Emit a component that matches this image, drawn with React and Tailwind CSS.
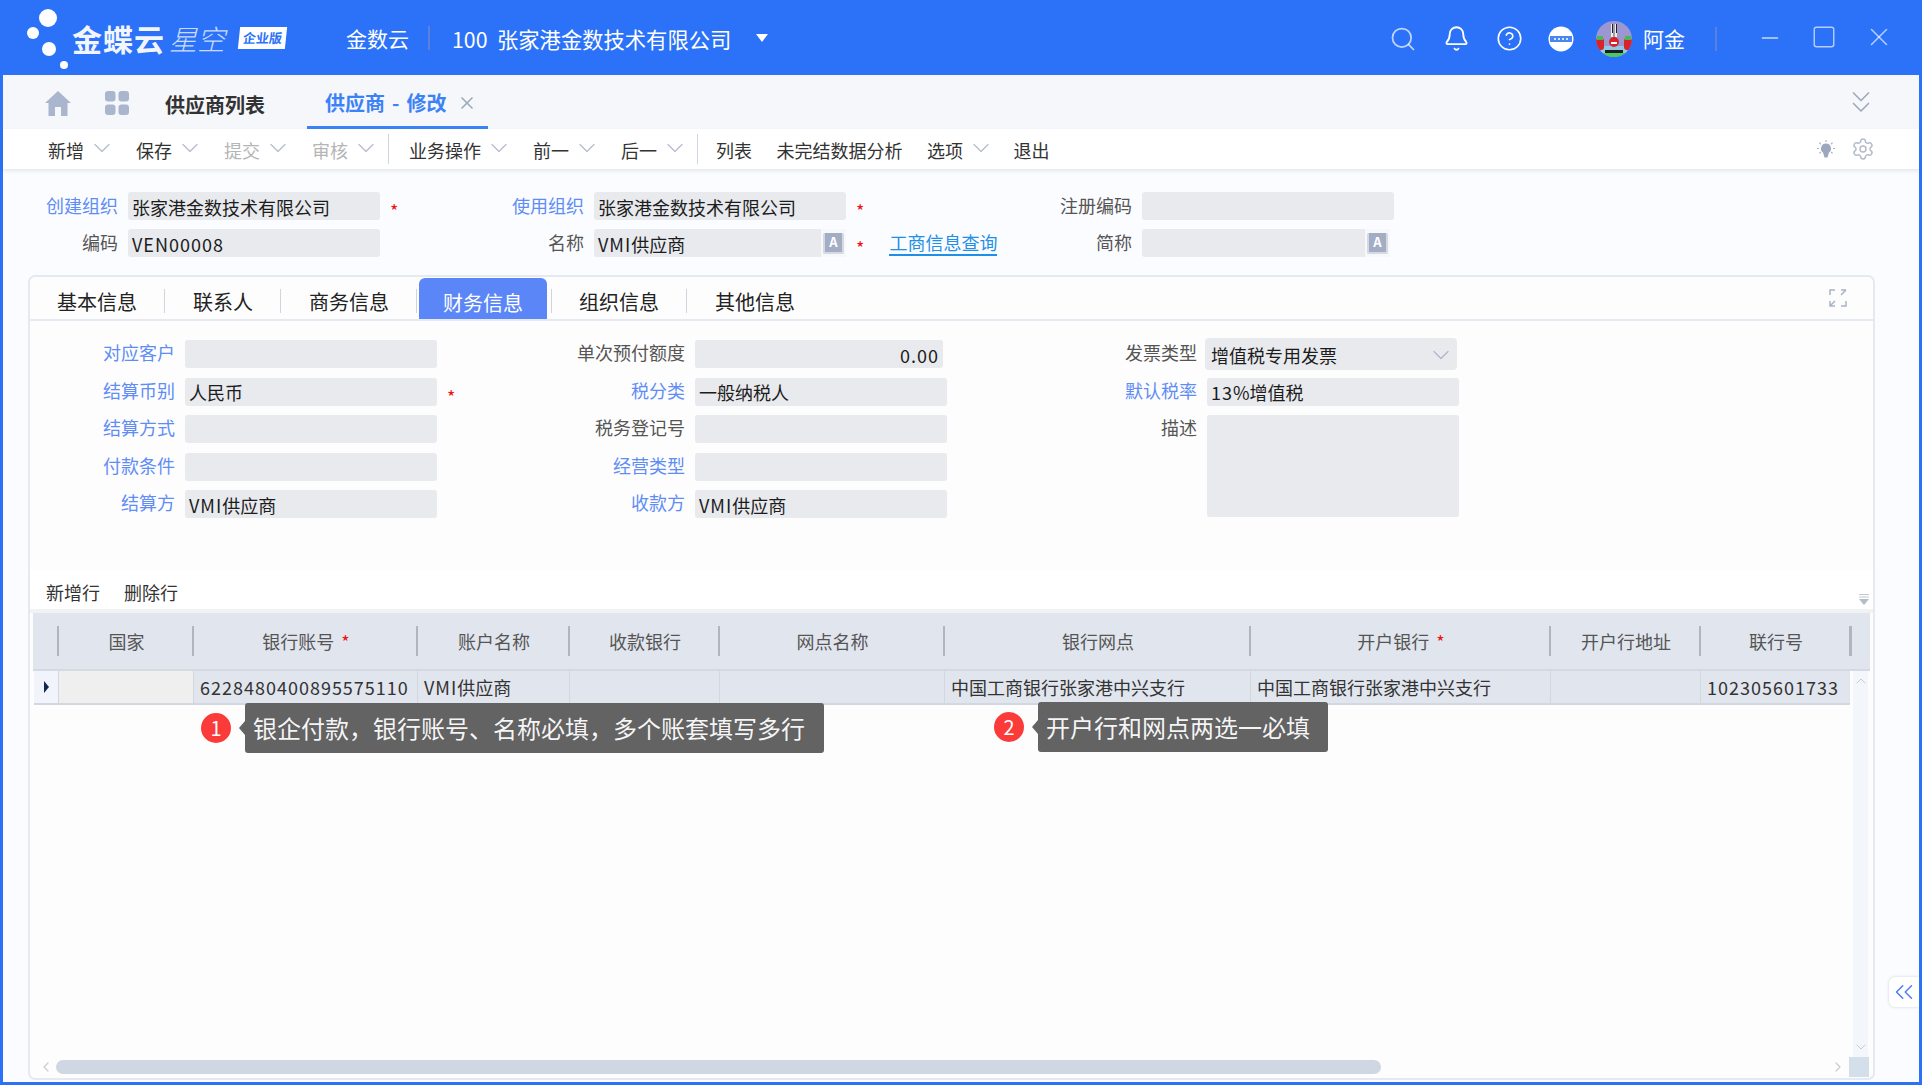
import { Bell, ChevronDown, ChevronLeft, ChevronRight, ChevronUp, ChevronsDown, ChevronsLeft, CircleHelp, Minus, Search, Settings, Square, X } from 'lucide-react';

const font = { fontFamily: '"Noto Sans CJK SC", "Noto Sans", sans-serif' };

const columns = [
  { label: '国家', w: 'w-[135px]' },
  { label: '银行账号', w: 'w-[224px]', required: true, value: '6228480400895575110', number: true },
  { label: '账户名称', w: 'w-[152px]', value: 'VMI供应商' },
  { label: '收款银行', w: 'w-[150px]' },
  { label: '网点名称', w: 'w-[225px]' },
  { label: '银行网点', w: 'w-[306px]', value: '中国工商银行张家港中兴支行' },
  { label: '开户银行', w: 'w-[300px]', required: true, value: '中国工商银行张家港中兴支行' },
  { label: '开户行地址', w: 'w-[150px]' },
  { label: '联行号', w: 'w-[150px]', value: '102305601733', number: true },
];

const colOne = [
  { label: '对应客户', blue: true },
  { label: '结算币别', blue: true, value: '人民币', star: true },
  { label: '结算方式', blue: true },
  { label: '付款条件', blue: true },
  { label: '结算方', blue: true, value: 'VMI供应商' },
];

const colTwo = [
  { label: '单次预付额度', value: '0.00', right: true },
  { label: '税分类', blue: true, value: '一般纳税人' },
  { label: '税务登记号' },
  { label: '经营类型', blue: true },
  { label: '收款方', blue: true, value: 'VMI供应商' },
];

// latin runs sit a little wider than the CJK around them
function Txt({ value }) {
  if (!value) return null;
  return value.split(/([A-Za-z0-9.]+)/).map((part, i) =>
    i % 2 ? <span key={i} className="tracking-[1px]">{part}</span> : part
  );
}

function Star({ className = '' }) {
  return <span className={`text-[#f01010] text-[18px] leading-none ${className}`}>*</span>;
}

function Label({ text, blue, w, className = '' }) {
  return (
    <span className={`${w} shrink-0 text-right text-[18px] leading-[24px] ${blue ? 'text-[#5f8df5]' : 'text-[#555555]'} ${className}`}>{text}</span>
  );
}

function LangIcon() {
  return (
    <span className="w-[25px] h-full flex items-center justify-center bg-[#f7f8fa] shrink-0">
      <span className="w-[21px] h-[21px] rounded-[2px] bg-[#a3adc4] border-2 border-t-0 border-[#d5d9e3] text-white text-[13px] leading-[18px] text-center font-bold">A</span>
    </span>
  );
}

function TopField({ label, blue, labelW, value, lang, star, w = 'w-[252px]' }) {
  return (
    <div className="flex items-center h-[28px]">
      <Label text={label} blue={blue} w={labelW} className="-mt-[3px]" />
      <div className={`${w} ml-[10px] h-full flex items-center bg-[#e8eaee] rounded-[3px] overflow-hidden`}>
        <span className="flex-1 pl-[4px] pt-[2px] text-[18px] text-[#1c1c1c] whitespace-nowrap"><Txt value={value} /></span>
        {lang && <LangIcon />}
      </div>
      {star && <Star className="ml-[10px] mt-[8px]" />}
    </div>
  );
}

function FormField({ label, blue, value, star, right, labelW, w = 'w-[252px]' }) {
  return (
    <div className="flex items-center h-[28px]">
      <Label text={label} blue={blue} w={labelW} className="-mt-[4px]" />
      <div className={`${w} ml-[10px] h-full flex items-center bg-[#e8eaee] rounded-[3px] px-[4px] pt-[2px] text-[18px] text-[#1c1c1c] ${right ? 'justify-end' : ''}`}>
        <Txt value={value} />
      </div>
      {star && <Star className="ml-[10px] mt-[8px]" />}
    </div>
  );
}

function ToolItem({ text, muted, arrow = true }) {
  return (
    <div className="flex items-center gap-[10px] shrink-0">
      <span className={`pt-[2px] text-[18px] leading-[24px] whitespace-nowrap ${muted ? 'text-[#b5b5b5]' : 'text-[#333333]'}`}>{text}</span>
      {arrow && <ChevronDown size={28} strokeWidth={1.1} className="text-[#b6bdcf] -mx-[6px] -mt-[2px]" />}
    </div>
  );
}

function Tip({ n, text, pos, boxW }) {
  return (
    <div className={`absolute flex items-center ${pos}`}>
      <span className="w-[30px] h-[30px] rounded-full bg-[#fb3a3a] text-white text-[20px] leading-[30px] text-center">{n}</span>
      <span className="ml-[8px] w-0 h-0 border-y-[7px] border-y-transparent border-r-[6px] border-r-[#636363]" />
      <div className={`${boxW} h-[50px] flex items-center bg-[#636363] rounded-[3px] pl-[8px] text-[24px] text-white/95 whitespace-nowrap`}>{text}</div>
    </div>
  );
}

function Logo() {
  return (
    <div className="flex items-center w-[346px] shrink-0">
      <svg width="72" height="75" viewBox="0 0 72 75" className="shrink-0">
        <circle cx="48" cy="18" r="9" fill="#fff" />
        <circle cx="33" cy="33" r="6" fill="#fff" />
        <circle cx="49" cy="49" r="7" fill="#fff" />
        <circle cx="64" cy="65" r="4" fill="#fff" />
      </svg>
      <span className="text-[30px] font-bold text-white/95 leading-none tracking-[1px] whitespace-nowrap">金蝶云</span>
      <span className="ml-[4px] text-[28px] italic font-light text-white/75 leading-none whitespace-nowrap">星空</span>
      <span className="ml-[14px] w-[47px] h-[22px] -skew-x-6 bg-white text-[#2b72f8] text-[13px] font-bold leading-[22px] text-center whitespace-nowrap">企业版</span>
    </div>
  );
}

function Avatar() {
  return (
    <svg width="36" height="36" viewBox="0 0 36 36" className="shrink-0">
      <defs>
        <clipPath id="av"><circle cx="18" cy="18" r="18" /></clipPath>
      </defs>
      <g clipPath="url(#av)">
        <rect width="36" height="36" fill="#9c97d0" />
        <rect y="32" width="36" height="4" fill="#49c95f" />
        <rect x="15" y="3" width="2" height="13" fill="#f1f5c0" />
        <rect x="19" y="3" width="2" height="13" fill="#f1f5c0" />
        <rect x="16" y="3" width="1" height="9" fill="#20242a" />
        <rect x="20" y="3" width="1" height="9" fill="#20242a" />
        <rect x="5" y="25" width="26" height="7" fill="#8fc8e0" />
        <rect x="0" y="17" width="8" height="12" rx="3" fill="#d8232a" />
        <rect x="28" y="17" width="8" height="12" rx="3" fill="#d8232a" />
        <rect x="1" y="15" width="6" height="4" fill="#47b85a" />
        <rect x="29" y="15" width="6" height="4" fill="#47b85a" />
        <ellipse cx="18" cy="21" rx="5" ry="5" fill="#d8232a" />
        <rect x="15" y="21" width="6" height="2" fill="#fff" />
        <rect x="9" y="29" width="18" height="3" fill="#1c1c24" />
      </g>
    </svg>
  );
}

function Header() {
  return (
    <header className="h-[75px] shrink-0 flex items-center text-white">
      <Logo />
      <span className="w-[82px] pt-[2px] text-[21px] whitespace-nowrap">金数云</span>
      <span className="w-[2px] h-[24px] bg-[#5d7fe0]" />
      <span className="ml-[22px] pt-[2px] text-[21.3px] whitespace-nowrap w-[303px]">100&nbsp;&nbsp;张家港金数技术有限公司</span>
      <span className="ml-[1px] w-0 h-0 border-x-[6px] border-x-transparent border-t-[8px] border-t-white" />
      <div className="ml-auto flex items-center pr-[28px] pt-[2px]">
        <Search size={28} strokeWidth={1.5} className="text-white/70" />
        <Bell size={27} strokeWidth={1.6} className="ml-[26px]" />
        <CircleHelp size={27} strokeWidth={1.4} className="ml-[26px]" />
        <svg width="26" height="26" viewBox="0 0 26 26" className="ml-[25px]">
          <circle cx="13" cy="13" r="12.5" fill="#fff" />
          <rect x="2" y="10" width="22" height="6" fill="#4b86ee" />
          <g fill="#d6e4fb">
            <rect x="6" y="12" width="2" height="2" />
            <rect x="10" y="12" width="2" height="2" />
            <rect x="14" y="12" width="2" height="2" />
            <rect x="18" y="12" width="2" height="2" />
          </g>
        </svg>
        <span className="ml-[22px]"><Avatar /></span>
        <span className="ml-[11px] text-[21px] whitespace-nowrap">阿金</span>
        <span className="ml-[30px] w-[2px] h-[24px] bg-[#5d7fe0]" />
        <Minus size={26} strokeWidth={1.3} className="ml-[40px] text-white/75 -mt-[2px]" />
        <Square size={26} strokeWidth={1.3} className="ml-[28px] text-white/65 -mt-[4px]" />
        <X size={30} strokeWidth={1.2} className="ml-[27px] text-white/65 -mt-[4px]" />
      </div>
    </header>
  );
}

function TabBar() {
  return (
    <div className="h-[54px] shrink-0 flex bg-[#f5f7fb] pl-[42px] pr-[44px]">
      <div className="flex items-center pt-[2px]">
        <svg width="26" height="25" viewBox="0 0 26 25">
          <path d="M13 0 L26 12 L22.5 12 L22.5 25 L16 25 L16 16 L10 16 L10 25 L3.5 25 L3.5 12 L0 12 Z" fill="#a9b6ce" />
        </svg>
        <svg width="24" height="24" viewBox="0 0 24 24" className="ml-[34px]" fill="#a9b6ce">
          <rect x="0" y="0" width="10.5" height="10.5" rx="3" />
          <rect x="13.5" y="0" width="10.5" height="10.5" rx="3" />
          <rect x="0" y="13.5" width="10.5" height="10.5" rx="3" />
          <rect x="13.5" y="13.5" width="10.5" height="10.5" rx="3" />
        </svg>
      </div>
      <span className="ml-[36px] self-center mt-[5px] text-[20px] font-semibold text-[#333333] whitespace-nowrap">供应商列表</span>
      <div className="ml-[42px] w-[181px] flex items-center pl-[18px] pt-[5px] border-b-[3px] border-[#3b82f6]">
        <span className="text-[20px] font-semibold text-[#3b82f6] whitespace-nowrap [word-spacing:2.5px]">供应商 - 修改</span>
        <X size={20} strokeWidth={2} className="ml-[11px] text-[#a0aabd]" />
      </div>
      <ChevronsDown size={36} strokeWidth={1.1} className="ml-auto mt-[9px] -mr-[4px] text-[#a0aabd]" />
    </div>
  );
}

function Toolbar() {
  return (
    <div className="relative h-[40px] shrink-0 flex items-center bg-white pl-[45px] pr-[44px] shadow-[0_2px_4px_rgba(60,70,100,0.12)]">
      <div className="flex items-center gap-[26px]">
        <ToolItem text="新增" />
        <ToolItem text="保存" />
        <ToolItem text="提交" muted />
        <ToolItem text="审核" muted />
      </div>
      <span className="ml-[14px] mr-[20px] w-px h-[30px] bg-[#cfd6e2]" />
      <div className="flex items-center gap-[26px]">
        <ToolItem text="业务操作" />
        <ToolItem text="前一" />
        <ToolItem text="后一" />
      </div>
      <span className="ml-[14px] mr-[18px] w-px h-[30px] bg-[#cfd6e2]" />
      <div className="flex items-center gap-[24.5px]">
        <ToolItem text="列表" arrow={false} />
        <ToolItem text="未完结数据分析" arrow={false} />
        <ToolItem text="选项" />
        <ToolItem text="退出" arrow={false} />
      </div>
      <div className="ml-auto flex items-center gap-[16px]">
        <svg width="18" height="19" viewBox="0 0 18 19">
          <path d="M9 3.5 a5 5 0 0 1 3 9 L10.5 17.5 L7.5 17.5 L6 12.5 a5 5 0 0 1 3 -9 Z" fill="#9da8bf" />
          <g stroke="#a9b3c7" strokeWidth="1.2" strokeLinecap="round">
            <path d="M9 0.5v1M2.8 3l.8.8M15.2 3l-.8.8M0.5 8.5h1M16.5 8.5h1M2.8 13l.8-.7M15.2 13l-.8-.7" />
          </g>
        </svg>
        <Settings size={24} strokeWidth={1.5} className="text-[#b3bccd]" />
      </div>
    </div>
  );
}

function TopForm() {
  return (
    <div className="h-[106px] shrink-0 pt-[23px] flex flex-col gap-[9px]">
      <div className="flex">
        <div className="w-[481px]"><TopField label="创建组织" blue labelW="w-[115px]" value="张家港金数技术有限公司" star /></div>
        <div className="w-[550px]"><TopField label="使用组织" blue labelW="w-[100px]" value="张家港金数技术有限公司" star /></div>
        <TopField label="注册编码" labelW="w-[98px]" w="w-[252px]" />
      </div>
      <div className="flex">
        <div className="w-[481px]"><TopField label="编码" labelW="w-[115px]" value="VEN00008" /></div>
        <div className="w-[550px] flex items-center">
          <TopField label="名称" labelW="w-[100px]" value="VMI供应商" lang star />
          <span className="ml-[25px] text-[18px] leading-[24px] text-[#1f8fe8] border-b-2 border-[#1f8fe8] whitespace-nowrap">工商信息查询</span>
        </div>
        <TopField label="简称" labelW="w-[98px]" w="w-[248px]" lang />
      </div>
    </div>
  );
}

function FinanceFields() {
  return (
    <div className="h-[249px] shrink-0 flex pt-[19px] bg-[#fdfdfd]">
      <div className="w-[505px] flex flex-col gap-[9.5px]">
        {colOne.map((f) => <FormField key={f.label} {...f} labelW="w-[145px]" />)}
      </div>
      <div className="w-[562px] flex flex-col gap-[9.5px]">
        {colTwo.map((f) => <FormField key={f.label} {...f} labelW="w-[150px]" w={f.right ? 'w-[248px]' : 'w-[252px]'} />)}
      </div>
      <div className="flex flex-col gap-[9.5px]">
        <div className="flex items-center h-[28px]">
          <Label text="发票类型" w="w-[100px]" className="-mt-[4px]" />
          <div className="ml-[8px] w-[252px] h-[32px] flex items-center justify-between bg-[#e8eaee] rounded-[4px] pl-[6px] pr-[2px] pt-[2px] text-[18px] text-[#1c1c1c]">
            增值税专用发票
            <ChevronDown size={28} strokeWidth={1.1} className="text-[#b0b8ca]" />
          </div>
        </div>
        <FormField label="默认税率" blue value="13%增值税" labelW="w-[100px]" />
        <div className="flex items-start">
          <Label text="描述" w="w-[100px]" />
          <div className="ml-[10px] w-[252px] h-[102px] bg-[#e8eaee] rounded-[3px]" />
        </div>
      </div>
    </div>
  );
}

function GridTable() {
  return (
    <div className="flex-1 min-h-0 flex flex-col mx-[3px]">
      <div className="h-[43px] shrink-0 flex items-center bg-white border-b-4 border-[#f1f2f4] pt-[5px] pl-[16px] pr-[2px] gap-[24px] -mx-[3px]">
        <span className="text-[18px] text-[#333333]">新增行</span>
        <span className="text-[18px] text-[#333333]">删除行</span>
        <svg width="10" height="12" viewBox="0 0 10 12" className="ml-auto mr-[2px] mt-[16px]">
          <path d="M0 0.5h10M0 3h10" stroke="#c3c8d2" strokeWidth="1" />
          <path d="M0 5h10L5 11Z" fill="#b5bbc7" />
        </svg>
      </div>
      <div className="h-[58px] shrink-0 flex items-center bg-[#e1e5ee] border-b-2 border-[#d5d9e2]">
        <div className="w-[24px] shrink-0" />
        {columns.map((c) => (
          <div key={c.label} className={`${c.w} shrink-0 h-[30px] flex items-center justify-center border-l-2 border-[#b0b5bf] pl-[2px] text-[18px] text-[#555555]`}>
            {c.label}
            {c.required && <Star className="ml-[7px] -mt-[1px]" />}
          </div>
        ))}
        <span className="w-[3px] h-[30px] bg-[#b0b5bf]" />
      </div>
      <div className="flex-1 min-h-0 flex">
        <div className="relative flex-1 min-w-0">
          <div className="h-[34px] flex bg-[#e1e5ee] border-b-2 border-[#d3d7e0] ml-px">
            <div className="w-[24px] shrink-0 flex items-center justify-center bg-[#f1f4fa]">
              <span className="w-0 h-0 border-y-[6px] border-y-transparent border-l-[5px] border-l-[#13264f]" />
            </div>
            {columns.map((c, i) => (
              <div key={c.label} className={`${c.w} shrink-0 flex items-center border-l border-[#d3d7e0] pl-[6px] text-[18px] text-[#333333] whitespace-nowrap ${i === 0 ? 'bg-[#efefef]' : ''}`}>
                <Txt value={c.value} />
              </div>
            ))}
          </div>
          <Tip n="1" text="银企付款，银行账号、名称必填，多个账套填写多行" pos="left-[168px] top-[32px]" boxW="w-[579px]" />
          <Tip n="2" text="开户行和网点两选一必填" pos="left-[961px] top-[31px]" boxW="w-[290px]" />
        </div>
        <div className="w-[15px] ml-[3px] mr-[2px] shrink-0 flex flex-col items-center justify-between bg-[#f3f6fb] pt-[2px] pb-[2px]">
          <ChevronUp size={16} strokeWidth={1.5} className="text-[#c8ccd4]" />
          <ChevronDown size={16} strokeWidth={1.5} className="text-[#c8ccd4]" />
        </div>
      </div>
      <div className="h-[20px] shrink-0 flex items-center mb-[1px]">
        <ChevronLeft size={16} strokeWidth={1.8} className="ml-[5px] text-[#c8ccd4]" />
        <div className="ml-[2px] w-[1325px] h-[14px] rounded-full bg-[#cfd7e2]" />
        <ChevronRight size={16} strokeWidth={1.8} className="ml-auto mr-[3px] text-[#c8ccd4]" />
        <div className="w-[20px] h-full mr-[1px] bg-[#d3e0ec]" />
      </div>
    </div>
  );
}

const tabText = 'mb-[2px] text-[20px] leading-[30px] text-[#222222]';
const tabSep = 'mb-[6px] w-px h-[24px] bg-[#cfd5df]';

export default function App() {
  return (
    <div style={font} className="w-full h-screen flex flex-col bg-[#2b72f8] overflow-hidden">
      <Header />
      <div className="relative flex-1 min-h-0 flex flex-col mx-[3px] mb-[3px] bg-[#fbfcff]">
        <TabBar />
        <Toolbar />
        <TopForm />
        <div className="flex-1 min-h-0 flex flex-col ml-[25px] mr-[44px] mb-[2px] border-2 border-[#e5e9f2] rounded-[7px] bg-[#fdfdfd]">
          <div className="h-[44px] shrink-0 flex items-end border-b-2 border-[#e5e9f2] pl-[27px] pr-[26px]">
            <span className={tabText}>基本信息</span>
            <span className={`ml-[27px] ${tabSep}`} />
            <span className={`ml-[28px] ${tabText}`}>联系人</span>
            <span className={`ml-[27px] ${tabSep}`} />
            <span className={`ml-[28px] ${tabText}`}>商务信息</span>
            <span className={`ml-[27px] ${tabSep}`} />
            <span className="ml-[2px] w-[128px] h-[41px] rounded-t-[6px] bg-[#5b86f7] text-white text-[20px] leading-[36px] pt-[7px] text-center">财务信息</span>
            <span className={`ml-[4px] ${tabSep}`} />
            <span className={`ml-[27px] ${tabText}`}>组织信息</span>
            <span className={`ml-[27px] ${tabSep}`} />
            <span className={`ml-[28px] ${tabText}`}>其他信息</span>
            <svg width="18" height="18" viewBox="0 0 18 18" fill="none" stroke="#aab3c4" strokeWidth="1.5" className="ml-auto mb-[12px]">
              <path d="M1 6V1h5M17 12v5h-5M12 1h5M17 1l-5 5M1 12v5h5M1 17l5-5" />
            </svg>
          </div>
          <FinanceFields />
          <GridTable />
        </div>
        <div className="absolute right-0 top-[902px] w-[30px] h-[30px] flex items-center justify-center bg-white rounded-l-[6px] shadow-[0_0_3px_rgba(120,135,170,0.35)]">
          <ChevronsLeft size={30} strokeWidth={1.2} className="text-[#4d7cf6]" />
        </div>
      </div>
    </div>
  );
}
